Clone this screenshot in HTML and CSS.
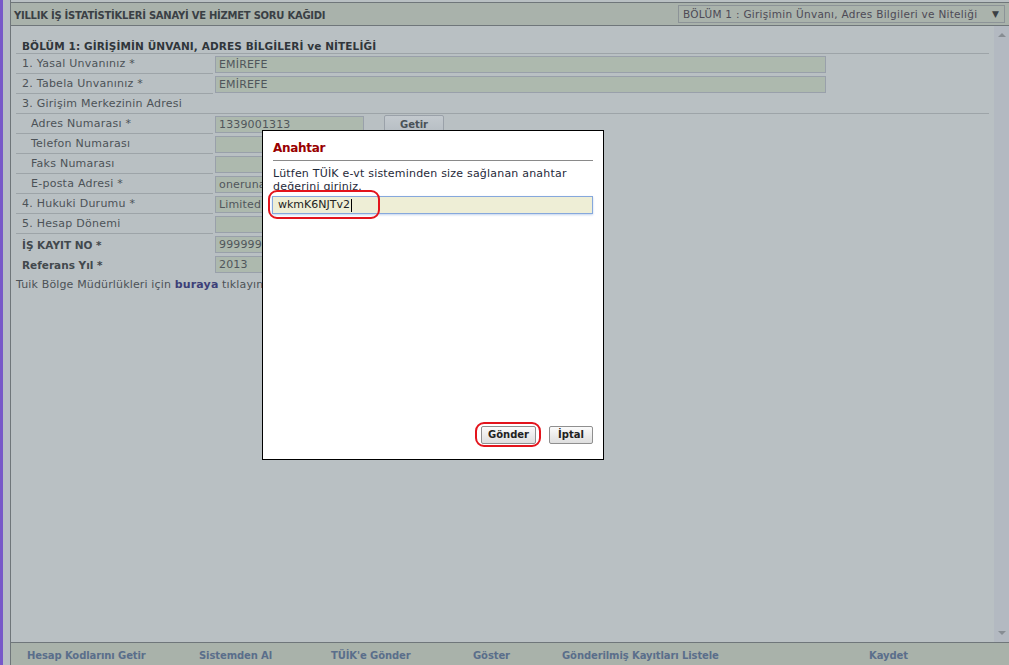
FILE: index.html
```html
<!DOCTYPE html>
<html lang="tr">
<head>
<meta charset="utf-8">
<title>Yıllık İş İstatistikleri</title>
<link rel="stylesheet" href="styles.css">
</head>
<body>
<div class="frame">
  <div class="edge"></div>
  <div class="main">
    <header class="topbar">
      <h1 class="title">YILLIK İŞ İSTATİSTİKLERİ SANAYİ VE HİZMET SORU KAĞIDI</h1>
      <div class="section-select"><span class="sel-text">BÖLÜM 1 : Girişimin Ünvanı, Adres Bilgileri ve Niteliği</span><span class="caret">▼</span></div>
    </header>
    <div class="body">
      <div class="content">
        <div class="form">
          <h2 class="sec-title">BÖLÜM 1: GİRİŞİMİN ÜNVANI, ADRES BİLGİLERİ ve NİTELİĞİ</h2>
          <div class="row"><div class="lbl">1. Yasal Unvanınız *</div><div class="fld"><div class="inp inp-wide">EMİREFE</div></div></div>
          <div class="row"><div class="lbl">2. Tabela Unvanınız *</div><div class="fld"><div class="inp inp-wide">EMİREFE</div></div></div>
          <div class="row row-full"><div class="lbl">3. Girişim Merkezinin Adresi</div><div class="fld"></div></div>
          <div class="row"><div class="lbl sub">Adres Numarası *</div><div class="fld"><div class="inp inp-short">1339001313</div><div class="btn-getir">Getir</div></div></div>
          <div class="row"><div class="lbl sub">Telefon Numarası</div><div class="fld"><div class="inp inp-short"></div></div></div>
          <div class="row"><div class="lbl sub">Faks Numarası</div><div class="fld"><div class="inp inp-short"></div></div></div>
          <div class="row"><div class="lbl sub">E-posta Adresi *</div><div class="fld"><div class="inp inp-short">oneruna</div></div></div>
          <div class="row"><div class="lbl">4. Hukuki Durumu *</div><div class="fld"><div class="inp inp-short">Limited</div></div></div>
          <div class="row"><div class="lbl">5. Hesap Dönemi</div><div class="fld"><div class="inp inp-short"></div></div></div>
          <div class="row row-plain"><div class="lbl strong">İŞ KAYIT NO *</div><div class="fld"><div class="inp inp-short">9999999999</div></div></div>
          <div class="row row-plain"><div class="lbl strong">Referans Yıl *</div><div class="fld"><div class="inp inp-short">2013</div></div></div>
          <p class="note">Tuik Bölge Müdürlükleri için <b>buraya</b> tıklayınız</p>
        </div>
      </div>
      <div class="scrollbar"><span class="arrow-up"></span><span class="arrow-down"></span></div>
    </div>
    <footer class="bottombar">
      <span class="link">Hesap Kodlarını Getir</span>
      <span class="link">Sistemden Al</span>
      <span class="link">TÜİK'e Gönder</span>
      <span class="link">Göster</span>
      <span class="link">Gönderilmiş Kayıtları Listele</span>
      <span class="link">Kaydet</span>
    </footer>
  </div>
</div>

<div class="dialog">
  <div class="dlg-title">Anahtar</div>
  <div class="dlg-rule"></div>
  <p class="dlg-text">Lütfen TÜİK e-vt sisteminden size sağlanan anahtar değerini giriniz.</p>
  <div class="dlg-input">wkmK6NJTv2<span class="cursor"></span></div>
  <div class="dlg-space"></div>
  <div class="dlg-buttons">
    <div class="dlg-btn btn-send">Gönder</div>
    <div class="dlg-btn btn-cancel">İptal</div>
  </div>
  <div class="mark mark-input"></div>
  <div class="mark mark-send"></div>
</div>
</body>
</html>
```
FILE: styles.css
```css
* { box-sizing: border-box; }
html, body { margin: 0; padding: 0; }
body {
  width: 1009px;
  height: 665px;
  overflow: hidden;
  position: relative;
  background: #b9c0c3;
  font-family: "DejaVu Sans", Verdana, sans-serif;
  font-size: 11px;
  color: #4c5257;
}
.frame { display: flex; height: 665px; }
.edge {
  width: 11px;
  flex: none;
  background: linear-gradient(to right, #7758c9 0, #7758c9 3px, #b8bec5 3px, #b8bec5 10px, #6f767a 10px, #6f767a 11px);
}
.main { flex: 1; min-width: 0; display: flex; flex-direction: column; }

/* header */
.topbar {
  flex: none;
  margin-top: 2px;
  height: 24px;
  border-top: 1px solid #6f767a;
  border-bottom: 1px solid #6f767a;
  background: #a9b2ab;
  display: flex;
  justify-content: space-between;
  align-items: flex-start;
}
.title {
  margin: 0;
  padding: 7px 0 0 3px;
  font-size: 10px;
  line-height: 12px;
  font-weight: bold;
  letter-spacing: -0.25px;
  color: #3a4045;
}
.section-select {
  margin: 2px 4px 0 0;
  width: 327px;
  height: 18px;
  border: 1px solid #8c9397;
  background: #aab3ac;
  display: flex;
  justify-content: space-between;
  align-items: center;
  padding: 0 5px 0 4px;
  color: #4d4a56;
}
.sel-text { font-size: 10.5px; letter-spacing: 0.28px; }
.caret { font-size: 9px; color: #3a3f44; }

/* body */
.body { flex: 1; min-height: 0; display: flex; }
.content { flex: 1; padding: 0 5px; }
.scrollbar {
  width: 15px;
  flex: none;
  background: #b3b9c1;
  display: flex;
  flex-direction: column;
  justify-content: space-between;
  align-items: center;
  padding: 7px 0 7px 1px;
}
.arrow-up {
  width: 0; height: 0;
  border-left: 4px solid transparent;
  border-right: 4px solid transparent;
  border-bottom: 4px solid #878d93;
}
.arrow-down {
  width: 0; height: 0;
  border-left: 4px solid transparent;
  border-right: 4px solid transparent;
  border-top: 4px solid #878d93;
}

.sec-title {
  margin: 0;
  padding: 14px 0 0 6px;
  font-size: 10.5px;
  line-height: 13px;
  font-weight: bold;
  letter-spacing: 0.1px;
  color: #30363b;
  border-bottom: 1px solid #9da4a8;
}
.row {
  display: grid;
  grid-template-columns: 197px 1fr;
  column-gap: 2px;
  height: 20px;
}
.lbl {
  border-bottom: 1px solid #9da4a8;
  padding-left: 6px;
  line-height: 19px;
  white-space: nowrap;
  letter-spacing: 0.25px;
}
.lbl.sub { padding-left: 15px; }
.row-full { border-bottom: 1px solid #9da4a8; }
.row-full .lbl { border-bottom: none; }
.row-plain .lbl { border-bottom: none; }
.lbl.strong { font-weight: bold; font-size: 10.5px; padding-top: 3px; line-height: 17px; letter-spacing: 0; color: #42484d; }
.fld { display: flex; align-items: flex-start; padding-top: 2px; }
.inp {
  height: 17px;
  border: 1px solid #99a0aa;
  background: #adb9ae;
  padding: 0 3px;
  line-height: 15px;
  color: #50565b;
  white-space: nowrap;
  letter-spacing: 0.15px;
}
.inp-wide { width: 611px; }
.inp-short { width: 149px; }
.btn-getir {
  margin: -1px 0 0 20px;
  width: 60px;
  height: 19px;
  border: 1px solid #9aa1a9;
  border-radius: 2px;
  background: linear-gradient(#c3c9ce, #b6bdc3);
  text-align: center;
  font-weight: bold;
  font-size: 10px;
  line-height: 17px;
  color: #4a5157;
}
.note {
  margin: 0;
  white-space: nowrap;
  line-height: 21px;
  letter-spacing: 0.15px;
}
.note b { color: #3d3f78; }

/* footer */
.bottombar {
  flex: none;
  height: 23px;
  border-top: 1px solid #6f767a;
  background: #a9b2aa;
  display: grid;
  grid-template-columns: 172px 132px 142px 89px 307px auto;
  align-items: center;
  padding: 2px 0 0 16px;
}
.link {
  font-weight: bold;
  font-size: 10px;
  letter-spacing: -0.1px;
  color: #5a6e8b;
  white-space: nowrap;
}

/* dialog */
.dialog {
  position: absolute;
  left: 262px;
  top: 130px;
  width: 342px;
  height: 330px;
  background: #fff;
  border: 1px solid #000;
  padding: 10px 10px 15px 10px;
  display: flex;
  flex-direction: column;
}
.dlg-title {
  font-weight: bold;
  font-size: 12px;
  line-height: 14px;
  letter-spacing: -0.3px;
  color: #990000;
}
.dlg-rule { margin-top: 5px; height: 1px; background: #8a8a8a; }
.dlg-text {
  margin: 6px 0 0 0;
  font-size: 11px;
  line-height: 13px;
  letter-spacing: 0.2px;
  color: #1f2a3a;
}
.dlg-input {
  margin: 3px 0 0 -1px;
  height: 18px;
  border: 1px solid #86a8dc;
  box-shadow: 0 1px 2px #c2d3ee;
  background: #eeeed6;
  padding: 0 0 0 5px;
  font-size: 11px;
  line-height: 16px;
  color: #222;
  display: flex;
  align-items: center;
}
.cursor { display: inline-block; width: 1px; height: 13px; background: #000; margin-left: 1px; }
.dlg-space { flex: 1; }
.dlg-buttons { display: flex; justify-content: flex-end; gap: 13px; }
.dlg-btn {
  height: 18px;
  border: 1px solid #8f8f8f;
  border-radius: 2px;
  background: linear-gradient(#fbfbfb, #dedede);
  font-weight: bold;
  font-size: 10px;
  line-height: 16px;
  color: #222;
  text-align: center;
}
.btn-send { width: 55px; }
.btn-cancel { width: 44px; }
.mark {
  position: absolute;
  border: 2.5px solid #e3141c;
  border-radius: 9px;
}
.mark-input { left: 5px; top: 59px; width: 112px; height: 29px; }
.mark-send { left: 212px; top: 291px; width: 66px; height: 25px; }
```
